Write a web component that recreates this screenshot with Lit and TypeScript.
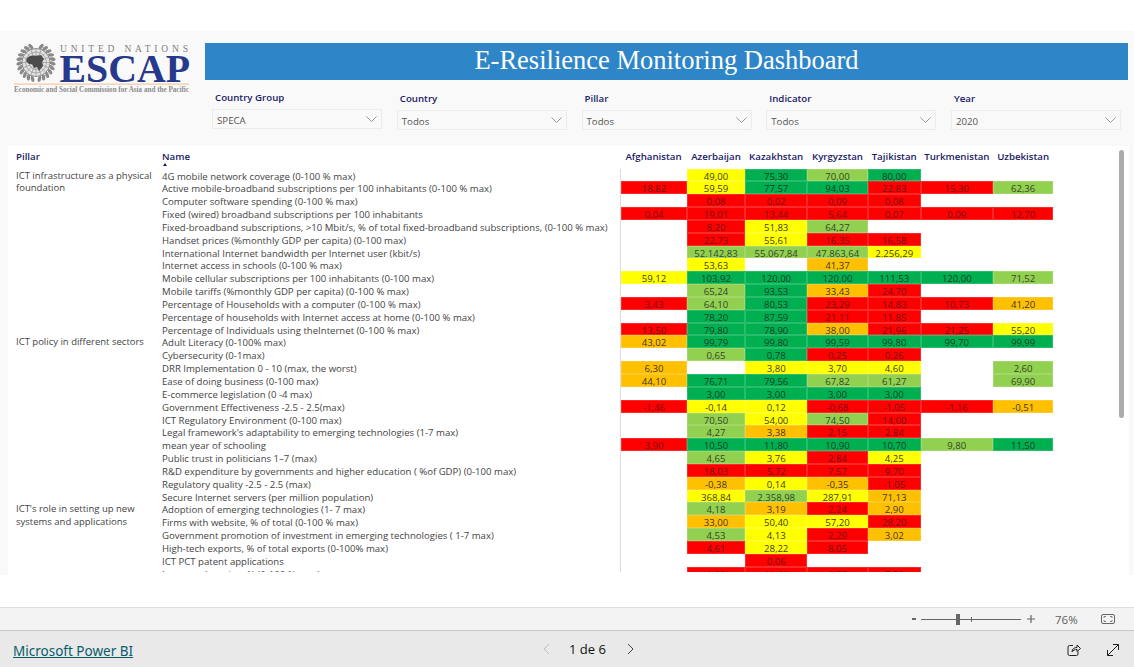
import { LitElement, html, css, svg } from 'lit'
import { customElement } from 'lit/decorators.js'

// Cell bands as they appear in the conditional formatting
type Band = 'R' | 'O' | 'Y' | 'L' | 'G' | ''
type Cell = [string, Band] | null

const COUNTRIES = ['Afghanistan', 'Azerbaijan', 'Kazakhstan', 'Kyrgyzstan', 'Tajikistan', 'Turkmenistan', 'Uzbekistan']

const PILLARS = [
  { name: 'ICT infrastructure as a physical foundation', span: 13 },
  { name: 'ICT policy in different sectors', span: 13 },
  { name: "ICT's role in setting up new systems and applications", span: 6 },
]

// "v:B" per column, "-" for an empty cell
const ROWS: [string, string][] = [
  ['4G mobile network coverage (0-100 % max)', '- 49,00:Y 75,30:G 70,00:L 80,00:G - -'],
  ['Active mobile-broadband subscriptions per 100 inhabitants (0-100 % max)', '18,82:R 59,59:Y 77,57:G 94,03:G 22,83:R 15,30:R 62,36:L'],
  ['Computer software spending (0-100 % max)', '- 0,08:R 0,02:R 0,09:R 0,08:R - -'],
  ['Fixed (wired) broadband subscriptions per 100 inhabitants', '0,04:R 19,01:R 13,44:R 5,64:R 0,07:R 0,09:R 12,70:R'],
  ['Fixed-broadband subscriptions, >10 Mbit/s, % of total fixed-broadband subscriptions, (0-100 % max)', '- 8,20:R 51,83:Y 64,27:L - - -'],
  ['Handset prices (%monthly GDP per capita) (0-100 max)', '- 22,73:R 55,61:Y 16,35:R 16,58:R - -'],
  ['International Internet bandwidth per Internet user (kbit/s)', '- 52.142,83:L 55.067,84:L 47.863,64:L 2.256,29:Y - -'],
  ['Internet access in schools (0-100 % max)', '- 53,63:Y - 41,37:O - - -'],
  ['Mobile cellular subscriptions per 100 inhabitants (0-100 max)', '59,12:Y 103,92:G 120,00:G 120,00:G 111,53:G 120,00:G 71,52:L'],
  ['Mobile tariffs (%monthly GDP per capita) (0-100 % max)', '- 65,24:L 93,53:G 33,43:O 24,70:R - -'],
  ['Percentage of Households with a computer (0-100 % max)', '3,43:R 64,10:L 80,53:G 23,29:R 14,83:R 10,73:R 41,20:O'],
  ['Percentage of households with Internet access at home (0-100 % max)', '- 78,20:G 87,59:G 21,11:R 11,85:R - -'],
  ['Percentage of Individuals using theInternet (0-100 % max)', '13,50:R 79,80:G 78,90:G 38,00:O 21,96:R 21,25:R 55,20:Y'],
  ['Adult Literacy (0-100% max)', '43,02:O 99,79:G 99,80:G 99,59:G 99,80:G 99,70:G 99,99:G'],
  ['Cybersecurity (0-1max)', '- 0,65:L 0,78:G 0,25:R 0,26:R - -'],
  ['DRR Implementation 0 - 10 (max, the worst)', '6,30:O - 3,80:Y 3,70:Y 4,60:Y - 2,60:L'],
  ['Ease of doing business (0-100 max)', '44,10:O 76,71:G 79,56:G 67,82:L 61,27:L - 69,90:L'],
  ['E-commerce legislation (0 -4 max)', '- 3,00:G 3,00:G 3,00:G 3,00:G - -'],
  ['Government Effectiveness -2.5 - 2.5(max)', '-1,46:R -0,14:Y 0,12:Y -0,68:R -1,05:R -1,16:R -0,51:O'],
  ['ICT Regulatory Environment (0-100 max)', '- 70,50:L 54,00:Y 74,50:L 14,00:R - -'],
  ["Legal framework's adaptability to emerging technologies (1-7 max)", '- 4,27:L 3,38:O 2,15:R 2,84:R - -'],
  ['mean year of schooling', '3,90:R 10,50:G 11,80:G 10,90:G 10,70:G 9,80:L 11,50:G'],
  ['Public trust in politicians 1–7 (max)', '- 4,65:L 3,76:Y 2,84:R 4,25:Y - -'],
  ['R&D expenditure by governments and higher education ( %of GDP) (0-100 max)', '- 18,03:R 5,72:R 7,57:R 9,70:R - -'],
  ['Regulatory quality -2.5 - 2.5 (max)', '- -0,38:O 0,14:Y -0,35:O -1,05:R - -'],
  ['Secure Internet servers (per million population)', '- 368,84:Y 2.358,98:L 287,91:Y 71,13:O - -'],
  ['Adoption of emerging technologies (1- 7 max)', '- 4,18:L 3,19:O 2,24:R 2,90:O - -'],
  ['Firms with website, % of total (0-100 % max)', '- 33,00:O 50,40:Y 57,20:Y 28,20:R - -'],
  ['Government promotion of investment in emerging technologies ( 1-7 max)', '- 4,53:L 4,13:Y 2,29:R 3,02:O - -'],
  ['High-tech exports, % of total exports (0-100% max)', '- 4,61:R 28,22:Y 8,05:R - - -'],
  ['ICT PCT patent applications', '- - 0,06:R - - - -'],
  ['Internet shopping, % (0-100 % max)', '- 1,93:R 11,00:R 0,92:R 7,50:R - -'],
]

const FILTERS = [
  { label: 'Country Group', value: 'SPECA' },
  { label: 'Country', value: 'Todos' },
  { label: 'Pillar', value: 'Todos' },
  { label: 'Indicator', value: 'Todos' },
  { label: 'Year', value: '2020' },
]

const parseCells = (s: string): Cell[] =>
  s.split(' ').map((c) => {
    if (c === '-') return null
    const [v, b] = c.split(':')
    return [v, b as Band]
  })

const chevron = html`<svg class="chev" width="11" height="6" viewBox="0 0 11 6"><path d="M.5.5l5 5 5-5" fill="none" stroke="#9a9a9a" stroke-width="1"/></svg>`

// Wreath leaves around the emblem, both sides
const leaves = Array.from({ length: 11 }, (_, i) => {
  const a = 18 + i * 15
  return svg`
    <ellipse cx="22" cy="2.8" rx="1.7" ry="3.2" fill="#8a8a8a" transform="rotate(${a} 22 19.5) rotate(24 22 2.8)"/>
    <ellipse cx="22" cy="2.8" rx="1.7" ry="3.2" fill="#8a8a8a" transform="rotate(${-a} 22 19.5) rotate(-24 22 2.8)"/>`
})

// Meridians of the polar map inside the emblem
const spokes = Array.from({ length: 8 }, (_, i) => svg`
  <line x1="22" y1="5.5" x2="22" y2="33.5" stroke="#8c8c8c" stroke-width=".6" transform="rotate(${i * 22.5} 22 19.5)"/>`)

@customElement('app-root')
export class AppRoot extends LitElement {
  static styles = css`
    :host {
      display: block;
      font-family: 'Open Sans', 'Noto Sans', sans-serif;
    }
    .page {
      display: flex;
      flex-direction: column;
      height: 667px;
      background: #fff;
      overflow: hidden;
    }
    .canvas {
      margin-top: 31px;
      height: 544px;
      background: #f9f9f9;
      display: flex;
      flex-direction: column;
    }
    .head {
      display: flex;
      height: 115px;
      padding: 12px 6px 0 14px;
      box-sizing: border-box;
    }
    .logo {
      width: 191px;
      flex: none;
    }
    .head-right {
      flex: 1;
      display: flex;
      flex-direction: column;
    }
    .title {
      height: 37px;
      background: #2e86c8;
      color: #fff;
      font: 400 26.5px/35px 'Liberation Serif', serif;
      text-align: center;
    }
    .filters {
      display: grid;
      grid-template-columns: repeat(5, 170px);
      column-gap: 14.75px;
      padding: 12px 0 0 7px;
    }
    .filter label {
      display: block;
      height: 18px;
      padding-left: 3px;
      font-size: 9.7px;
      font-weight: 600;
      line-height: 13px;
      color: #1a1a66;
    }
    .filter:first-child {
      margin-top: -1px;
    }
    .box {
      height: 20px;
      box-sizing: border-box;
      border: 1px solid #ececec;
      display: flex;
      align-items: center;
      justify-content: space-between;
      padding: 0 4px;
      font-size: 9.7px;
      color: #555;
    }
    .box span {
      padding-top: 2px;
    }
    .panel {
      flex: 1;
      margin: 0 5px 0 8px;
      background: #fff;
      position: relative;
      overflow: hidden;
    }
    .table {
      display: grid;
      grid-template-columns: 146px 458px 67px 58px 62.3px 60.4px 53px 72.3px 60.3px;
      grid-template-rows: 22.5px;
      grid-auto-rows: 12.85px;
      padding-left: 8px;
      height: 426px;
      overflow: hidden;
      font-size: 9.6px;
      color: #444;
    }
    .th {
      font-size: 9.7px;
      font-weight: 600;
      color: #1a1a66;
      line-height: 21px;
      white-space: nowrap;
      position: relative;
    }
    .th.num {
      text-align: center;
    }
    .caret {
      position: absolute;
      left: 1px;
      top: 17px;
      width: 0;
      height: 0;
      border: 2.5px solid transparent;
      border-top: 0;
      border-bottom: 3px solid #1a1a66;
    }
    .pillar {
      font-size: 9.5px;
      line-height: 12.85px;
      padding: 1px 4px 0 0;
    }
    .name {
      line-height: 15.2px;
      white-space: nowrap;
    }
    .val {
      line-height: 15.2px;
      text-align: center;
      white-space: nowrap;
      box-shadow: inset 0 0 0 1px rgba(255, 255, 255, 0.16);
    }
    .val.first {
      border-left: 1px solid #dcdcdc;
    }
    .R { background: #ff0000; color: #701010; }
    .O { background: #ffc000; color: #40392a; }
    .Y { background: #ffff00; color: #404020; }
    .L { background: #92d050; color: #34452a; }
    .G { background: #00b050; color: #123d2a; }
    .scroll {
      position: absolute;
      top: 4px;
      right: 5px;
      width: 5px;
      height: 268px;
      border-radius: 3px;
      background: #ababab;
    }
    .zoombar {
      margin-top: 32px;
      height: 23px;
      box-sizing: border-box;
      background: #f3f3f3;
      border-top: 1px solid #dedede;
      display: flex;
      align-items: center;
      justify-content: flex-end;
      padding-right: 19px;
      color: #605e5c;
    }
    .minus {
      width: 4px;
      height: 2px;
      background: #666;
      margin-right: 5px;
    }
    .slider {
      width: 100px;
      height: 1px;
      background: #666;
      position: relative;
    }
    .thumb {
      position: absolute;
      left: 35px;
      top: -5px;
      width: 4px;
      height: 11px;
      background: #666;
    }
    .tick {
      position: absolute;
      left: 50px;
      top: -2px;
      width: 1px;
      height: 5px;
      background: #666;
    }
    .plus {
      margin-left: 6px;
      width: 8px;
      height: 8px;
    }
    .pct {
      margin: 0 22px 0 20px;
      font-size: 11.5px;
      width: 24px;
    }
    .footer {
      flex: 1;
      background: #e9e9e9;
      border-top: 1px solid #c8c8c8;
      display: grid;
      grid-template-columns: 529px auto 1fr;
      align-items: center;
      padding: 1px 13px 0;
    }
    .link {
      color: #0b5c6b;
      font-size: 13.5px;
      text-decoration: underline;
      font-family: 'Noto Sans', sans-serif;
    }
    .pager {
      display: flex;
      align-items: center;
      gap: 19px;
      font-size: 13px;
      font-weight: 500;
      color: #111;
      margin-top: -1px;
    }
    .pager svg:last-child {
      margin-left: 2px;
    }
    .actions {
      display: flex;
      justify-content: flex-end;
      gap: 25px;
      padding-right: 1px;
    }
    svg {
      display: block;
    }
  `

  private _logo() {
    return html`<svg width="178" height="52" viewBox="0 0 178 52">
      <g>
        ${leaves}
        <circle cx="22" cy="19.5" r="14" fill="#e2e2e2" stroke="#777" stroke-width=".8"/>
        ${spokes}
        <circle cx="22" cy="19.5" r="10.5" fill="none" stroke="#8c8c8c" stroke-width=".6"/>
        <circle cx="22" cy="19.5" r="7" fill="none" stroke="#8c8c8c" stroke-width=".6"/>
        <path d="M13 15c3-3 6-3 9-2l5-1 3 4-2 3 1 4-4 5-2-4-3 1-2-4-3 0-3-3z" fill="#4c4c4c"/>
      </g>
      <text x="46" y="9" font-family="Liberation Serif, serif" font-size="9.5" fill="#808080" textLength="128" lengthAdjust="spacing">UNITED NATIONS</text>
      <text x="45.5" y="38.7" font-family="Liberation Serif, serif" font-size="40" font-weight="700" fill="#263a8c" textLength="130.5" lengthAdjust="spacingAndGlyphs">ESCAP</text>
      <rect x="0" y="40.6" width="175" height="1" fill="#f0c090"/>
      <text x="0" y="48.8" font-family="Liberation Serif, serif" font-size="7.6" font-weight="700" fill="#8c8c8c" textLength="175" lengthAdjust="spacingAndGlyphs">Economic and Social Commission for Asia and the Pacific</text>
    </svg>`
  }

  private _table() {
    let rowAt = 2
    return html`<div class="table">
      <div class="th">Pillar</div>
      <div class="th">Name<span class="caret"></span></div>
      ${COUNTRIES.map((c) => html`<div class="th num">${c}</div>`)}
      ${PILLARS.map((p) => {
        const start = rowAt
        rowAt += p.span
        return html`<div class="pillar" style="grid-column:1;grid-row:${start} / span ${p.span}">${p.name}</div>`
      })}
      ${ROWS.map(([name, cells], r) => html`
        <div class="name" style="grid-column:2;grid-row:${r + 2}">${name}</div>
        ${parseCells(cells).map((c, i) => html`<div
          class="val ${c ? c[1] : ''} ${i === 0 ? 'first' : ''}"
          style="grid-column:${i + 3};grid-row:${r + 2}"
        >${c ? c[0] : ''}</div>`)}
      `)}
    </div>`
  }

  render() {
    return html`<div class="page">
      <div class="canvas">
        <div class="head">
          <div class="logo">${this._logo()}</div>
          <div class="head-right">
            <div class="title">E-Resilience Monitoring Dashboard</div>
            <div class="filters">
              ${FILTERS.map((f) => html`<div class="filter">
                <label>${f.label}</label>
                <div class="box"><span>${f.value}</span>${chevron}</div>
              </div>`)}
            </div>
          </div>
        </div>
        <div class="panel">
          ${this._table()}
          <div class="scroll"></div>
        </div>
      </div>
      <div class="zoombar">
        <div class="minus"></div>
        <div class="slider"><div class="tick"></div><div class="thumb"></div></div>
        <svg class="plus" viewBox="0 0 8 8"><path d="M4 0v8M0 4h8" stroke="#666" stroke-width="1.2"/></svg>
        <span class="pct">76%</span>
        <svg width="14" height="10" viewBox="0 0 14 10"><rect x=".5" y=".5" width="13" height="9" rx="1.5" fill="none" stroke="#666"/><path d="M3 4V2.5h2M9 2.5h2V4M3 6v1.5h2M9 7.5h2V6" fill="none" stroke="#666" stroke-width=".8"/></svg>
      </div>
      <div class="footer">
        <span><a class="link">Microsoft Power BI</a></span>
        <div class="pager">
          <svg width="8" height="12" viewBox="0 0 8 12"><path d="M7 1L2 6l5 5" fill="none" stroke="#bdbdbd"/></svg>
          <span>1 de 6</span>
          <svg width="8" height="12" viewBox="0 0 8 12"><path d="M1 1l5 5-5 5" fill="none" stroke="#444"/></svg>
        </div>
        <div class="actions">
          <svg width="14" height="14" viewBox="0 0 14 14" fill="none" stroke="#222"><path d="M6 2.5H2.500a1.500 1.500 0 0 0-1.500 1.500v7a1.500 1.500 0 0 0 1.500 1.500h7a1.500 1.500 0 0 0 1.500-1.500V8.500"/><path d="M5 9c0-3 2-4.500 5-4.500V2l3.500 3.500L10 8.500V6.500C8 6.500 6 7 5 9z"/></svg>
          <svg width="14" height="14" viewBox="0 0 14 14" fill="none" stroke="#222"><path d="M1.500 12.500L12.500 1.500M7 1.500h5.500V7M1.500 7v5.500H7"/></svg>
        </div>
      </div>
    </div>`
  }
}
